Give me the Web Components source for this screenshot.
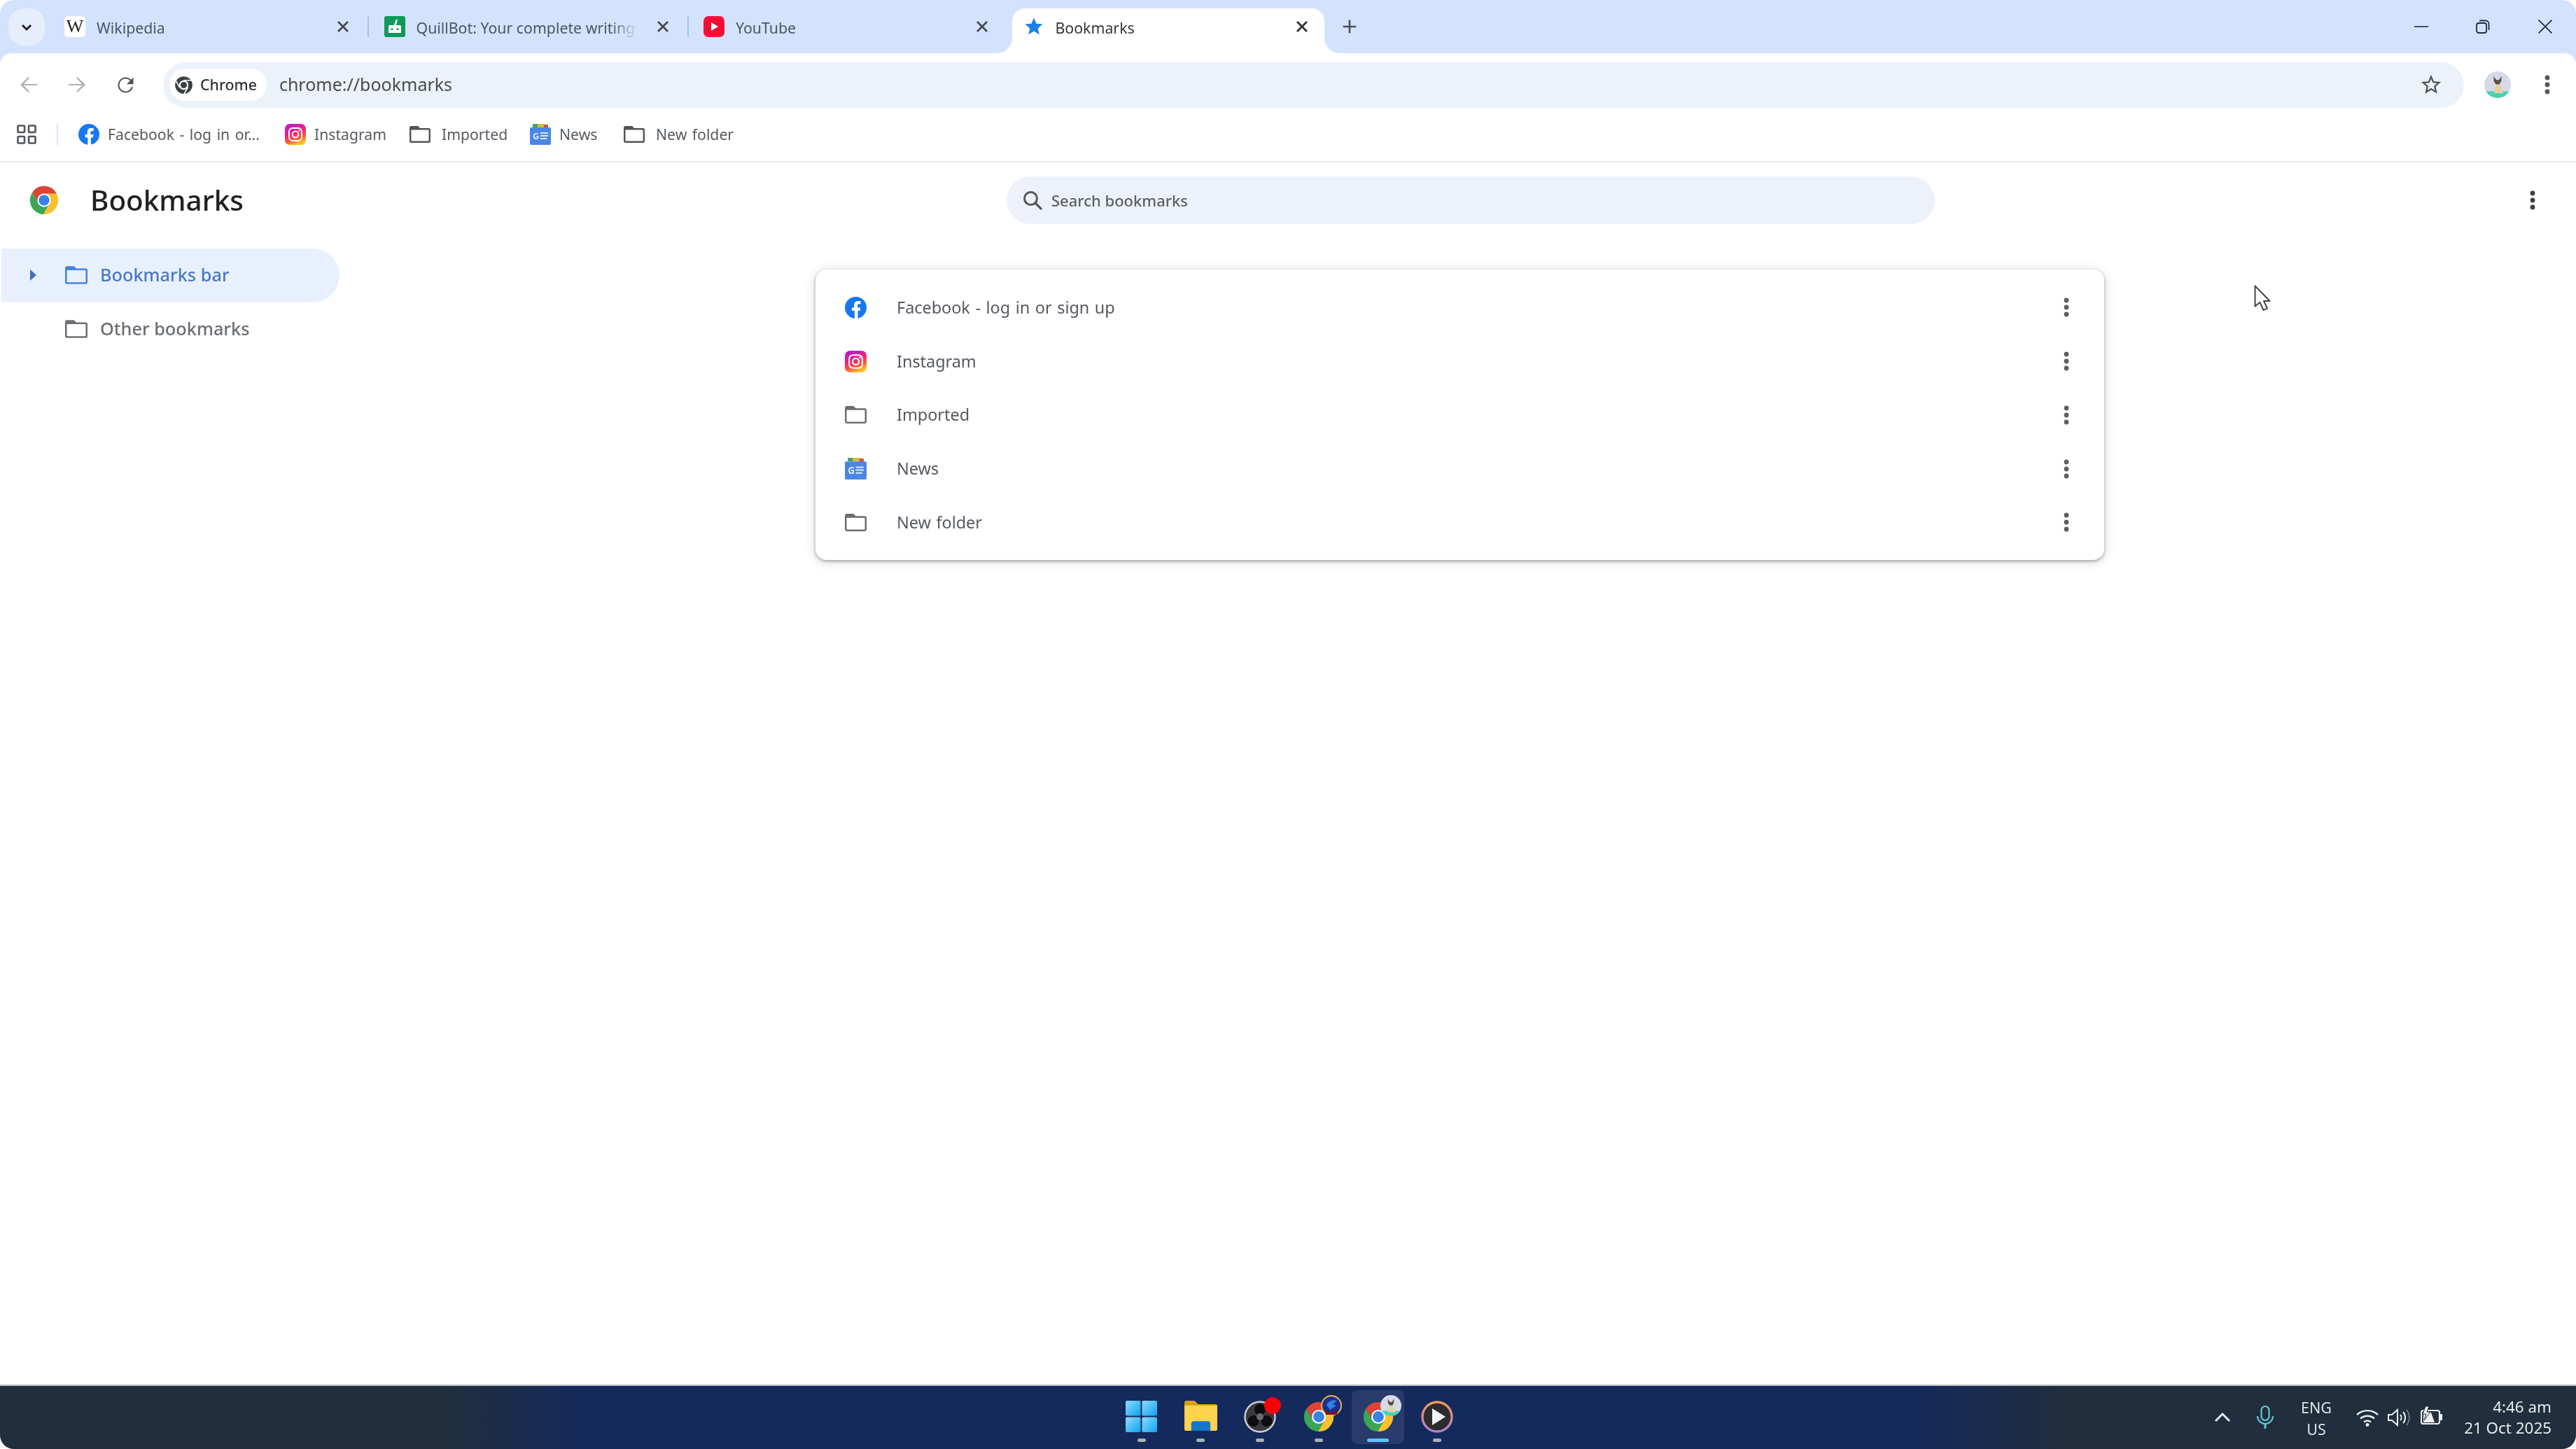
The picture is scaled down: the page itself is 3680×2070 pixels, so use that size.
<!DOCTYPE html>
<html lang="en"><head><meta charset="utf-8"><title>Bookmarks</title>
<style>
html,body{margin:0;height:100%;background:#fff;overflow:hidden}
body{font-family:"Noto Sans","Open Sans",sans-serif}
</style></head>
<body>
<browser-shell>
  <tab-strip slot="strip">
    <browser-tab icon="wiki" label="Wikipedia" sep></browser-tab>
    <browser-tab icon="quill" label="QuillBot: Your complete writing" sep fade></browser-tab>
    <browser-tab icon="yt" label="YouTube"></browser-tab>
    <browser-tab icon="starfill" label="Bookmarks" active></browser-tab>
  </tab-strip>
  <nav-toolbar slot="toolbar"></nav-toolbar>
  <bookmark-bar slot="bar">
    <bar-item icon="fb" label="Facebook - log in or..." w="295"></bar-item>
    <bar-item icon="ig" label="Instagram" w="178"></bar-item>
    <bar-item icon="folder" label="Imported" w="172"></bar-item>
    <bar-item icon="news" label="News" w="134"></bar-item>
    <bar-item icon="folder" label="New folder" w="170"></bar-item>
  </bookmark-bar>
  <page-header slot="header"></page-header>
  <side-nav slot="side">
    <side-row label="Bookmarks bar" selected></side-row>
    <side-row label="Other bookmarks"></side-row>
  </side-nav>
  <list-card slot="main">
    <list-row icon="fb" label="Facebook - log in or sign up"></list-row>
    <list-row icon="ig" label="Instagram"></list-row>
    <list-row icon="folder" label="Imported"></list-row>
    <list-row icon="news" label="News"></list-row>
    <list-row icon="folder" label="New folder"></list-row>
  </list-card>
  <task-bar slot="taskbar"></task-bar>
  <mouse-cursor slot="cursor"></mouse-cursor>
</browser-shell>
<script>
const CHROME=`<path fill="#db4437" d="M24 14H43.6A22 22 0 0 0 5.54 12.03L15.34 29A10 10 0 0 1 24 14Z"/><path fill="#fbc02d" d="M43.6 14A22 22 0 0 1 22.86 45.97L32.66 29A10 10 0 0 0 24 14Z"/><path fill="#3aa757" d="M22.86 45.97A22 22 0 0 1 5.54 12.03L15.34 29A10 10 0 0 0 32.66 29Z"/><circle cx="24" cy="24" r="10.5" fill="#fff"/><circle cx="24" cy="24" r="8.3" fill="#3b82e6"/>`;
const AVATAR=`<defs><clipPath id="av"><circle cx="20" cy="20" r="20"/></clipPath></defs><g clip-path="url(#av)"><rect width="40" height="40" fill="#d6d9e8"/><rect y="30" width="40" height="10" fill="#44d2b4"/><path d="M15 33c1-7 2-12 3-16h5c2 5 3 10 6 16z" fill="#e8cfa2"/><path d="M14 7l4 6h4l4-6-.5 8-3 4.5h-5l-3-4.5z" fill="#575045"/></g>`;
const ICONS={
 wiki:['0 0 30 30',`<rect width="30" height="30" rx="6" fill="#fff"/><text x="15" y="23" font-family="Liberation Serif" font-size="26" text-anchor="middle" fill="#222">W</text>`],
 quill:['0 0 30 30',`<rect width="30" height="30" rx="3" fill="#0f9a5a"/><path d="M15 14L18 5" stroke="#fff" stroke-width="2.6" fill="none"/><path d="M6 15q0-2 2-2h14q2 0 2 2v9H6z" fill="#fff"/><circle cx="11" cy="18.5" r="1.5" fill="#0f9a5a"/><circle cx="19" cy="18.5" r="1.5" fill="#0f9a5a"/>`],
 yt:['0 0 30 30',`<rect width="30" height="30" rx="7" fill="#f5123f"/><rect x="2" y="3" width="26" height="24" rx="6" fill="#ee0f33"/><path d="M11 9l10 6-10 6z" fill="#fff"/>`],
 starfill:['0 0 24 24',`<path fill="#1a7fe8" d="M12 17.27L18.18 21l-1.64-7.03L22 9.24l-7.19-.61L12 2 9.19 8.63 2 9.24l5.46 4.73L5.82 21z"/>`],
 x:['0 0 24 24',`<path d="M6 6L18 18M18 6L6 18" stroke="currentColor" stroke-width="2.4" fill="none"/>`],
 chev:['0 0 24 24',`<path d="M6 9l6 6 6-6" stroke="currentColor" stroke-width="3" fill="none"/>`],
 plus:['0 0 24 24',`<path d="M12 5v14M5 12h14" stroke="currentColor" stroke-width="2" fill="none"/>`],
 min:['0 0 20 20',`<path d="M0 10H20" stroke="currentColor" stroke-width="1.6" fill="none"/>`],
 restore:['0 0 20 20',`<rect x="1" y="5" width="14" height="14" rx="3" stroke="currentColor" stroke-width="1.8" fill="none"/><path d="M5 1.5h9a4.5 4.5 0 0 1 4.5 4.5v9" stroke="currentColor" stroke-width="1.8" fill="none"/>`],
 close:['0 0 20 20',`<path d="M.5 .5L19.5 19.5M19.5 .5L.5 19.5" stroke="currentColor" stroke-width="1.7" fill="none"/>`],
 back:['0 0 24 24',`<path fill="currentColor" d="M20 11.3H7.2l5.4-5.6-1-1L4 12l7.6 7.3 1-1-5.4-5.6H20z"/>`],
 fwd:['0 0 24 24',`<path fill="currentColor" transform="matrix(-1 0 0 1 24 0)" d="M20 11.3H7.2l5.4-5.6-1-1L4 12l7.6 7.3 1-1-5.4-5.6H20z"/>`],
 reload:['0 0 24 24',`<path fill="currentColor" d="M17.65 6.35A8 8 0 1 0 19.73 14h-1.6A6.5 6.5 0 1 1 12 5.5c1.8 0 3.4.75 4.6 1.9L13 11h7V4z"/>`],
 chromemono:['0 0 48 48',`<circle cx="24" cy="24" r="22" fill="#3c4043"/><circle cx="24" cy="24" r="12" fill="#fff"/><circle cx="24" cy="24" r="8" fill="#3c4043"/><path d="M24 12H46M13.6 30L2.6 11M34.4 30L23.4 49" stroke="#fff" stroke-width="3" fill="none"/>`],
 chrome:['0 0 48 48',CHROME],
 star:['0 0 24 24',`<path fill="currentColor" d="M22 9.24l-7.19-.62L12 2 9.19 8.63 2 9.24l5.46 4.73L5.82 21 12 17.27 18.18 21l-1.63-7.03L22 9.24zM12 15.4l-3.76 2.27 1-4.28-3.32-2.88 4.38-.38L12 6.1l1.71 4.04 4.38.38-3.32 2.88 1 4.28L12 15.4z"/>`],
 avatar:['0 0 40 40',AVATAR],
 dots:['0 0 8 28',`<circle cx="4" cy="4" r="3.4" fill="currentColor"/><circle cx="4" cy="14" r="3.4" fill="currentColor"/><circle cx="4" cy="24" r="3.4" fill="currentColor"/>`],
 grid:['0 0 28 28',`<g fill="none" stroke="currentColor" stroke-width="2.6"><rect x="1.5" y="1.5" width="9.5" height="9.5" rx="1"/><rect x="17" y="1.5" width="9.5" height="9.5" rx="1"/><rect x="1.5" y="17" width="9.5" height="9.5" rx="1"/><rect x="17" y="17" width="9.5" height="9.5" rx="1"/></g>`],
 fb:['0 0 24 24',`<circle cx="12" cy="12" r="12" fill="#1877f2"/><path fill="#fff" d="M16.7 15.5l.5-3.5h-3.3V9.8c0-1 .5-1.9 2-1.9h1.5v-3s-1.4-.2-2.7-.2c-2.7 0-4.5 1.6-4.5 4.6V12H7.7v3.5h3v8.4a12 12 0 0 0 3.6 0v-8.4z"/>`],
 ig:['0 0 30 30',`<defs><linearGradient id="g" x1=".15" y1="0" x2=".55" y2="1"><stop offset="0" stop-color="#b31bd6"/><stop offset=".45" stop-color="#f0207f"/><stop offset=".75" stop-color="#fb5a35"/><stop offset="1" stop-color="#fdc52a"/></linearGradient></defs><rect width="30" height="30" rx="7" fill="url(#g)"/><rect x="6" y="6" width="18" height="18" rx="5" fill="none" stroke="#fff" stroke-width="2"/><circle cx="15" cy="15" r="4.4" fill="none" stroke="#fff" stroke-width="2"/><circle cx="20.5" cy="9.5" r="1.3" fill="#fff"/>`],
 folder:['2 4 20 16',`<path fill="currentColor" fill-rule="evenodd" d="M3.8 4H10l2 2h8.2A1.8 1.8 0 0 1 22 7.8v10.4a1.8 1.8 0 0 1-1.8 1.8H3.8A1.8 1.8 0 0 1 2 18.2V5.8A1.8 1.8 0 0 1 3.8 4zM3.6 7.6v10.8h16.8V7.6z"/>`],
 news:['0 0 30 30',`<rect x="4" y="0" width="8" height="5" fill="#47a560"/><rect x="11" y="0" width="10" height="5" fill="#d8b93a"/><rect x="20" y="1" width="6" height="5" fill="#d0503e"/><rect y="5" width="30" height="25" rx="2" fill="#4a86e8"/><text x="4" y="22" font-family="Noto Sans" font-weight="700" font-size="13" fill="#dfe9fb">G</text><path d="M15 13h11M15 17h11M15 21h9" stroke="#dfe9fb" stroke-width="2"/>`],
 search:['0 0 28 28',`<circle cx="11.5" cy="11.5" r="9" fill="none" stroke="currentColor" stroke-width="3"/><path d="M18 18l9 9" stroke="currentColor" stroke-width="3.2" fill="none"/>`],
 arrow:['0 0 9 16',`<path d="M0 0l9 8-9 8z" fill="currentColor"/>`],
 cursor:['0 0 24 38',`<path d="M1.5 1.5V30.5L8.5 25L13.5 36L19 33.5L14 23H22.5Z" fill="#fff" stroke="#3b3f44" stroke-width="1.9" stroke-linejoin="round"/>`],
 win:['0 0 46 46',`<defs><linearGradient id="w" x1="0" y1="0" x2="1" y2="1"><stop offset="0" stop-color="#8fdcfd"/><stop offset="1" stop-color="#0aa2ef"/></linearGradient></defs><rect width="22" height="22" rx="2" fill="url(#w)"/><rect x="24" width="22" height="22" rx="2" fill="url(#w)"/><rect y="24" width="22" height="22" rx="2" fill="url(#w)"/><rect x="24" y="24" width="22" height="22" rx="2" fill="url(#w)"/>`],
 explorer:['0 0 48 44',`<path d="M0 3q0-3 3-3h12l5 5h25q3 0 3 3v4H0z" fill="#d9a106"/><path d="M0 7h48v35q0 2-2 2H2q-2 0-2-2z" fill="#ffd34f"/><path d="M10 44V34q0-4 4-4h20q4 0 4 4v10z" fill="#1478c8"/>`],
 obs:['0 0 46 46',`<circle cx="23" cy="23" r="21.5" fill="#3a3a3e" stroke="#cfcfd3" stroke-width="2.4"/><circle cx="23" cy="12.5" r="8" fill="#0d0d0f"/><circle cx="13.5" cy="29" r="8" fill="#0d0d0f"/><circle cx="32.5" cy="29" r="8" fill="#0d0d0f"/><circle cx="23" cy="23" r="5" fill="#6a6a70"/>`],
 helmet:['0 0 30 30',`<circle cx="15" cy="15" r="14" fill="#1d2f87" stroke="#e8b45a" stroke-width="2"/><path d="M6 22q9 6 18 0l-1 6H7z" fill="#7a1420"/><path d="M8 14q5-9 15-6l-6 5 5 2-9 6z" fill="#2f7fe8"/>`],
 player:['0 0 46 46',`<defs><linearGradient id="p" x1="0" y1="0" x2="0" y2="1"><stop offset="0" stop-color="#f09a52"/><stop offset="1" stop-color="#b07ed2"/></linearGradient></defs><circle cx="23" cy="23" r="21" fill="#2c2c30" stroke="url(#p)" stroke-width="3.4"/><path d="M16 11l19 12-19 12z" fill="#f4f4f4"/>`],
 up:['0 0 24 24',`<path d="M2 17l10-10 10 10" stroke="currentColor" stroke-width="3" fill="none"/>`],
 mic:['0 0 24 34',`<rect x="6.5" y="1" width="11" height="20" rx="5.5" fill="none" stroke="#66c6d6" stroke-width="2.2"/><path d="M1 15a11 11 0 0 0 22 0" fill="none" stroke="#66c6d6" stroke-width="2.2"/><path d="M12 26v7" stroke="#66c6d6" stroke-width="3"/>`],
 wifi:['0 0 32 26',`<g fill="none" stroke="currentColor" stroke-width="2.4"><path d="M1 9a22 22 0 0 1 30 0"/><path d="M6 14.5a15 15 0 0 1 20 0"/><path d="M11 19.5a7.5 7.5 0 0 1 10 0"/></g><circle cx="16" cy="23.5" r="2.4" fill="currentColor"/>`],
 speaker:['0 0 32 26',`<g fill="none" stroke="currentColor" stroke-width="2"><path d="M1 9v8h5l8 7V2L6 9z"/><path d="M18 9a6 6 0 0 1 0 8"/><path d="M22 5a12 12 0 0 1 0 16"/></g><path d="M27 2a18 18 0 0 1 0 22" fill="none" stroke="#7a828a" stroke-width="1.6"/>`],
 battery:['0 0 32 28',`<rect x="1" y="7" width="26" height="19" rx="3" fill="none" stroke="currentColor" stroke-width="2.2"/><rect x="28" y="12" width="3" height="9" rx="1" fill="currentColor"/><path d="M4 24V10h11l5 14z" fill="currentColor"/><path d="M7 1L3 12h5l-3 9 9-12H9l3-8z" fill="currentColor" stroke="#202e3c" stroke-width="1"/>`],
};
function ic(name,w,h,color){const [vb,body]=ICONS[name];h=h||w;
 return `<svg viewBox="${vb}" width="${w}" height="${h}" style="display:block;flex:none;${color?'color:'+color:''}" aria-hidden="true">${body}</svg>`}
function def(tag,css,html){
 customElements.define(tag,class extends HTMLElement{
  constructor(){super();this.attachShadow({mode:'open'})}
  connectedCallback(){this.shadowRoot.innerHTML=`<style>${css}</style>`+(typeof html==='function'?html(this):html)}
 });
}
def('browser-shell',`
 :host{display:flex;flex-direction:column;width:100vw;height:100vh;position:relative;background:#fff;filter:blur(.7px)}
 .chrome{background:#d3e3fd;border-radius:20px 20px 0 0}
 .sheet{background:#fff;border-radius:16px 16px 0 0;border-bottom:2px solid #e8e9eb}
 .page{flex:1;min-height:0;display:flex;flex-direction:column}
 .content{flex:1;display:flex;min-height:0;padding-top:15px}
`,`<div class="chrome"><slot name="strip"></slot><div class="sheet"><slot name="toolbar"></slot><slot name="bar"></slot></div></div>
 <div class="page"><slot name="header"></slot><div class="content"><slot name="side"></slot><slot name="main"></slot></div></div>
 <slot name="taskbar"></slot><slot name="cursor"></slot>`);
def('tab-strip',`
 :host{display:flex;height:76px;align-items:flex-end;padding-left:12px;box-sizing:border-box}
 .search{width:52px;height:53px;background:#e6eefc;border-radius:22px;display:flex;align-items:center;justify-content:center;align-self:flex-start;margin:12px 12px 0 0;color:#1f2328}
 .plus{width:52px;height:52px;margin-bottom:12px;display:flex;align-items:center;justify-content:center;color:#4d5156}
 .ctl{margin-left:auto;display:flex;margin-bottom:12px}
 .ctl span{width:88.5px;height:52px;display:flex;align-items:center;justify-content:center;color:#1f2a3a}
`,`<div class="search">${ic('chev',24)}</div><slot></slot><div class="plus">${ic('plus',32)}</div>
 <div class="ctl"><span>${ic('min',20)}</span><span>${ic('restore',20)}</span><span>${ic('close',20)}</span></div>`);
def('browser-tab',`
 :host{display:block;width:456.5px;height:64px;position:relative;flex:none;font-size:21.3px;color:#4b5563}
 .in{display:flex;align-items:center;height:52px;padding-left:16px;width:446px;box-sizing:border-box}
 .t{margin-left:16px;width:316px;white-space:nowrap;overflow:hidden;line-height:30px;margin-top:3px}
 :host([fade]) .t{-webkit-mask-image:linear-gradient(90deg,#000 88%,transparent)}
 .x{position:absolute;left:400px;top:12px;color:#45494d}
 .sep{position:absolute;left:449px;top:11px;width:2px;height:30px;background:#a9c3ea}
 :host([active]){color:#333639}
 :host([active]) .x{color:#2c2f33}
 :host([active]) .bg{position:absolute;left:0;top:0;bottom:0;width:446px;background:#fff;border-radius:18px 18px 0 0}
 :host([active]) .bg::before,:host([active]) .bg::after{content:"";position:absolute;bottom:0;width:22px;height:22px}
 :host([active]) .bg::before{left:-22px;background:radial-gradient(circle at 0 0,transparent 21.5px,#fff 22.5px)}
 :host([active]) .bg::after{right:-22px;background:radial-gradient(circle at 100% 0,transparent 21.5px,#fff 22.5px)}
 .in,.x{z-index:1}.in{position:relative}
`,h=>`<div class="bg"></div><div class="in">${ic(h.getAttribute('icon'),30)}<div class="t">${h.getAttribute('label')}</div></div>
 <div class="x">${ic('x',28)}</div>${h.hasAttribute('sep')?'<div class="sep"></div>':''}`);
def('nav-toolbar',`
 :host{display:flex;align-items:center;height:90px;padding-left:6px;padding-right:37px;box-sizing:border-box}
 .n{width:69.5px;display:flex;justify-content:center}
 .omni{flex:1;height:65px;margin-left:18.5px;background:#edf2fa;border-radius:33px;display:flex;align-items:center;padding:0 30px 0 9px}
 .chip{display:flex;align-items:center;height:46px;background:#fff;border-radius:23px;padding:0 14px 0 7px;font-size:21.3px;font-weight:500;color:#2f3236}
 .chip b{font-weight:500;margin-left:10px;line-height:1}
 .url{margin-left:18px;font-size:25px;color:#474b50;line-height:1;margin-top:-1px}
 .star{margin-left:auto;color:#4f5357}
 .av{margin-left:29px;width:38px;height:38px}
 .dots{margin-left:48px;color:#54585d}
`,`<div class="n">${ic('back',36,36,'#aeb1b6')}</div><div class="n">${ic('fwd',36,36,'#aeb1b6')}</div><div class="n">${ic('reload',33,33,'#505459')}</div>
 <div class="omni"><div class="chip">${ic('chromemono',27)}<b>Chrome</b></div><div class="url">chrome://bookmarks</div><div class="star">${ic('star',34)}</div></div>
 <div class="av">${ic('avatar',38)}</div><div class="dots">${ic('dots',8,28)}</div>`);
def('bookmark-bar',`
 :host{display:flex;align-items:center;height:52px;margin-bottom:12px;padding-left:24px}
 .g{color:#50545a}
 .s{width:2px;height:30px;background:#d9e4f5;margin:0 29px 0 29px}
 ::slotted(*){flex:none}
`,`<div class="g">${ic('grid',28)}</div><div class="s"></div><slot></slot>`);
def('bar-item',`
 :host{display:flex;align-items:center;gap:12px;font-size:21.2px;word-spacing:2px;color:#555a60;white-space:nowrap;box-sizing:border-box}
 span{margin-top:-1px}
`,h=>{h.style.width=h.getAttribute('w')+'px';const i=h.getAttribute('icon');
 return `${i==='folder'?ic(i,30,24,'#505459'):ic(i,30)}<span style="${i==='folder'?'margin-left:4px':''}">${h.getAttribute('label')}</span>`});
def('page-header',`
 :host{display:flex;align-items:center;height:108px;padding-left:41px;box-sizing:border-box}
 h1{margin:1px 0 0 44px;width:1309px;font-size:40.4px;font-weight:500;color:#202124;line-height:1}
 .box{width:1326px;height:68px;background:#edf2fa;border-radius:34px;display:flex;align-items:center;padding-left:23px;box-sizing:border-box;font-size:22px;font-weight:500;color:#5c6066}
 .box span{margin-left:13px}
 .d{margin-left:auto;margin-right:58px;color:#3c4043}
`,`${ic('chrome',44)}<h1>Bookmarks</h1><div class="box">${ic('search',28,28,'#54585d')}<span>Search bookmarks</span></div><div class="d">${ic('dots',8,28)}</div>`);
def('side-nav',`:host{display:flex;flex-direction:column;width:485px;flex:none;box-sizing:border-box;padding-left:2px}`,`<slot></slot>`);
def('side-row',`
 :host{display:flex;align-items:center;height:76.75px;padding-left:41px;font-size:25.3px;font-weight:500;color:#6a6e73;border-radius:0 38px 38px 0;box-sizing:border-box}
 :host([selected]){background:#e8f0fe;color:#4a78c6}
 .a{width:9px;height:16px;color:#3f6fc4}
 .f{margin-left:41px;margin-right:18px}
 span{margin-top:-2px}
`,h=>`<div class="a">${h.hasAttribute('selected')?ic('arrow',9,16):''}</div><div class="f">${ic('folder',32,26,h.hasAttribute('selected')?'#4a82dd':'#6c7075')}</div><span>${h.getAttribute('label')}</span>`);
def('list-card',`
 :host{display:block;width:1841px;height:415px;margin:30px 0 0 680px;background:#fff;border-radius:16px;padding:16px 0;box-sizing:border-box;box-shadow:0 2px 4px rgba(60,64,67,.4),0 2px 14px 2px rgba(60,64,67,.16)}
`,`<slot></slot>`);
def('list-row',`
 :host{display:flex;align-items:center;height:76.75px;padding-left:42px;padding-right:50px;font-size:23.4px;word-spacing:1.5px;color:#55595e;box-sizing:border-box}
 span{margin-left:43px;margin-top:-1px}
 .d{margin-left:auto;color:#5b5f64}
`,h=>{const i=h.getAttribute('icon');return `${i==='folder'?ic(i,31,25,'#6a6e73'):ic(i,31)}<span>${h.getAttribute('label')}</span><div class="d">${ic('dots',8,28)}</div>`});
def('task-slot',`
 :host{display:flex;width:84.5px;height:77px;justify-content:center;flex:none}
 .b{width:75px;height:77px;border-radius:8px;position:relative;display:flex;justify-content:center;padding-top:15px;box-sizing:border-box}
 :host([active]) .b{background:rgba(255,255,255,.085)}
 .i{position:absolute;left:50%;bottom:3px;width:12px;height:5px;margin-left:-6px;border-radius:3px;background:#a8b0bd}
 :host([active]) .i{width:31px;margin-left:-16px;background:#60c2f6}
 ::slotted(*){display:block}
`,`<div class="b"><slot></slot><div class="i"></div></div>`);
def('badge-icon',`
 :host{display:block;width:46px;height:46px;position:relative}
 .o{position:absolute}
`,h=>{const b=h.getAttribute('badge');const base=ic(h.getAttribute('icon'),46);
 if(b==='red')return base+`<div class="o" style="left:29px;top:-5px;width:24px;height:24px;border-radius:50%;background:#fb0007"></div>`;
 if(b)return base+`<div class="o" style="left:26px;top:-8px">${ic(b,30)}</div>`;return base});
def('task-bar',`
 :host{display:grid;grid-template-columns:1fr auto 1fr;height:92px;flex:none;box-sizing:border-box;border-top:2px solid #b4b8be;border-radius:0 0 20px 20px;
  background:linear-gradient(90deg,#212f3c 0,#212f3c 17%,#14295c 23%,#14295c 74%,#202e3d 80%,#202e3d 100%);color:#e9ecef;font-size:22.4px}
 .mid{display:flex;padding-top:6px;padding-left:4px;grid-column:2}
 .tray{grid-column:3;display:flex;align-items:center;justify-content:flex-end;padding-right:35px;padding-bottom:1px}
 .lang{width:44px;margin-left:39px;margin-right:35px;margin-top:3px;text-align:center;line-height:31px;color:#dfe3e7;font-size:21.5px}
 .clock{width:130px;margin-left:25px;text-align:right;line-height:30px}
`,`<div class="mid">
  <task-slot>${ic('win',45)}</task-slot>
  <task-slot>${ic('explorer',47,43)}</task-slot>
  <task-slot><badge-icon icon="obs" badge="red"></badge-icon></task-slot>
  <task-slot><badge-icon icon="chrome" badge="helmet"></badge-icon></task-slot>
  <task-slot active><badge-icon icon="chrome" badge="avatar"></badge-icon></task-slot>
  <task-slot><badge-icon icon="player"></badge-icon></task-slot>
 </div>
 <div class="tray">${ic('up',24,24,'#e6e9ec')}<div style="margin-left:37px">${ic('mic',24,34)}</div>
  <div class="lang">ENG<br>US</div>${ic('wifi',32,26,'#eef0f2')}<div style="margin-left:13px">${ic('speaker',32,26,'#eef0f2')}</div><div style="margin-left:15px;margin-top:-6px">${ic('battery',32,28,'#eef0f2')}</div>
  <div class="clock">4:46 am<br>21 Oct 2025</div></div>`);
def('mouse-cursor',`:host{position:absolute;left:3220px;top:407px;width:24px;height:38px}`,ic('cursor',24,38));
</script>
</body></html>
